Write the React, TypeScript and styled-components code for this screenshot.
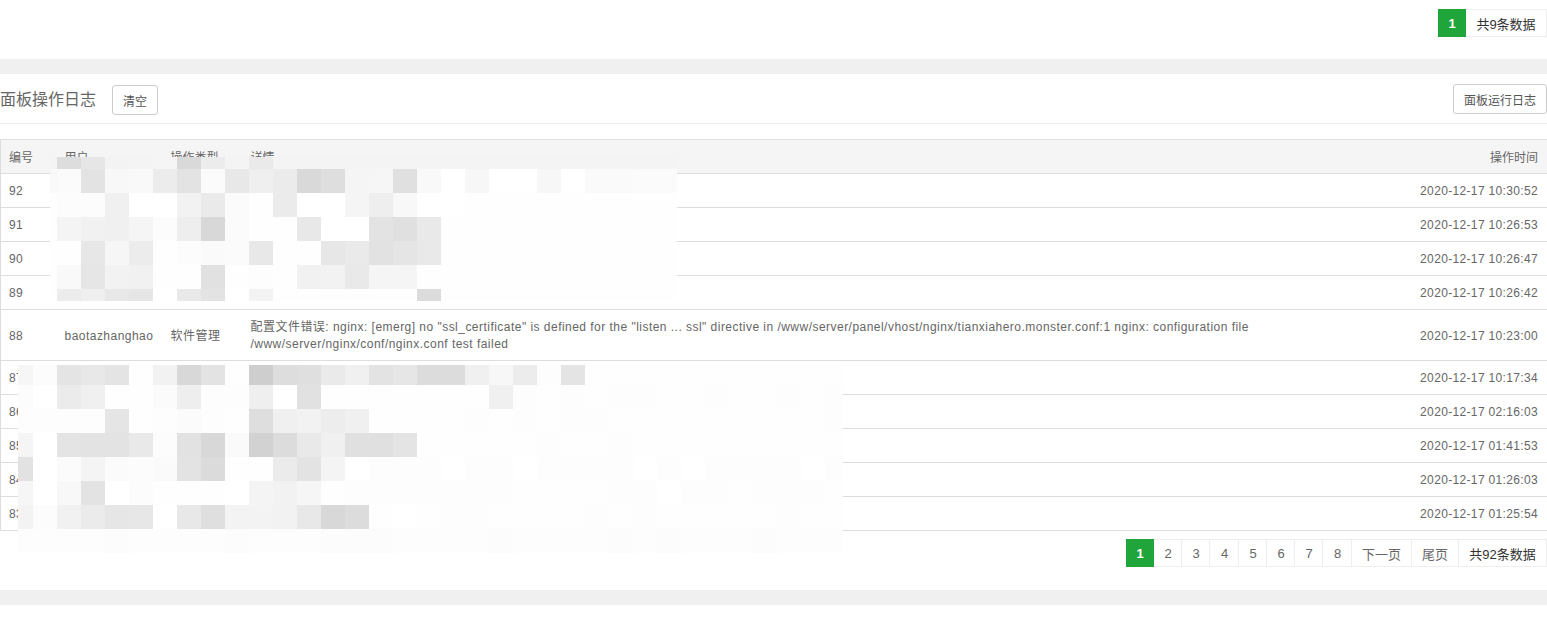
import React from 'react'
import styled, { createGlobalStyle } from 'styled-components'

const GlobalStyle = createGlobalStyle`
  html, body {
    margin: 0;
    background: #fff;
  }
  body {
    font-family: "Liberation Sans", "Noto Sans CJK SC", sans-serif;
    font-size: 12px;
    color: #666;
    overflow: hidden;
  }
`

const Page = styled.div`
  position: relative;
  width: 1547px;
  height: 619px;
  overflow: hidden;
`

const TopPager = styled.div`
  height: 59px;
  padding-top: 9px;
  box-sizing: border-box;
  display: flex;
  justify-content: flex-end;
`

const Band = styled.div`
  height: 15px;
  background: #f0f0f0;
`

const PanelHead = styled.div`
  height: 50px;
  box-sizing: border-box;
  border-bottom: 1px solid #ececec;
  padding-top: 10px;
  display: flex;
  justify-content: space-between;
  align-items: flex-start;
`

const TitleGroup = styled.div`
  display: flex;
  align-items: center;
  padding-top: 1px;
`

const Title = styled.span`
  font-size: 16px;
  line-height: 30px;
  color: #666;
`

const LogButton = styled.button<{ $gap?: number }>`
  height: 30px;
  box-sizing: border-box;
  margin-left: ${p => p.$gap ?? 0}px;
  padding: 0 10px;
  background: #fff;
  border: 1px solid #ccc;
  border-radius: 3px;
  font: inherit;
  font-size: 12px;
  color: #555;
`

const Table = styled.table`
  width: 1547px;
  margin-top: 15px;
  border-collapse: collapse;
  table-layout: fixed;
  letter-spacing: 0.34px;
`

const HeadCell = styled.th<{ $right?: boolean }>`
  height: 34px;
  padding: ${p => (p.$right ? '0 9px 0 8px' : '0 8px')};
  box-sizing: border-box;
  background: #f5f5f5;
  border: 1px solid #ddd;
  border-left: ${p => (p.$right ? 'none' : '')};
  border-right: ${p => (p.$right ? '' : 'none')};
  font-weight: 400;
  text-align: ${p => (p.$right ? 'right' : 'left')};
  color: #666;
  letter-spacing: 0;
`

const Cell = styled.td<{ $right?: boolean }>`
  height: 34px;
  padding: ${p => (p.$right ? '9px 9px 7px 8px' : '9px 8px 7px')};
  box-sizing: border-box;
  border-top: 1px solid #ddd;
  border-bottom: 1px solid #ddd;
  border-left: ${p => (p.$right ? 'none' : '1px solid #ddd')};
  border-right: ${p => (p.$right ? '1px solid #ddd' : 'none')};
  line-height: 17px;
  text-align: ${p => (p.$right ? 'right' : 'left')};
  color: #666;
`

const InnerCell = styled(Cell)`
  border-left: none;
  letter-spacing: 0.47px;
`

const InnerHead = styled(HeadCell)`
  border-left: none;
`

const BottomPager = styled.div`
  margin-top: 8px;
  height: 51px;
  display: flex;
  justify-content: flex-end;
  align-items: flex-start;
`

const PageItem = styled.span<{ $w: number; $active?: boolean; $dark?: boolean; $num?: boolean }>`
  width: ${p => p.$w}px;
  height: 28px;
  box-sizing: border-box;
  padding-left: ${p => (p.$num ? 1 : 0)}px;
  display: flex;
  align-items: center;
  justify-content: center;
  font-size: 13px;
  background: ${p => (p.$active ? '#20a53a' : '#fff')};
  color: ${p => (p.$active ? '#fff' : p.$dark ? '#333' : '#666')};
  font-weight: ${p => (p.$active ? 700 : 400)};
  border: ${p => (p.$active ? 'none' : '1px solid #eee')};
  border-left: none;
`

const Mosaic = styled.div<{ $left: number; $top: number; $width: number; $cols: string; $rows: string }>`
  position: absolute;
  left: ${p => p.$left}px;
  top: ${p => p.$top}px;
  width: ${p => p.$width}px;
  display: grid;
  grid-template-columns: ${p => p.$cols};
  grid-template-rows: ${p => p.$rows};
  overflow: hidden;
`

const Tile = styled.div<{ $v: string }>`
  background: #${p => p.$v}${p => p.$v}${p => p.$v};
`

const rows = [
  ['92', '2020-12-17 10:30:52'],
  ['91', '2020-12-17 10:26:53'],
  ['90', '2020-12-17 10:26:47'],
  ['89', '2020-12-17 10:26:42'],
]

const rowsAfter = [
  ['87', '2020-12-17 10:17:34'],
  ['86', '2020-12-17 02:16:03'],
  ['85', '2020-12-17 01:41:53'],
  ['84', '2020-12-17 01:26:03'],
  ['83', '2020-12-17 01:25:54'],
]

// page 2-8 cells are not all the same width in the reference
const pageCells: [string, number][] = [
  ['2', 28], ['3', 28], ['4', 29], ['5', 28], ['6', 28], ['7', 28], ['8', 29],
]

// pixelated cover over the first rows, one string per row, 2 hex digits per tile
const firstCover = [
  'f4 dd e6 f3 f4 f5 d9 ec f4 ea f4 f4 f4 f4 f4 f4 f4 f4 f4 f4 f4 f4 f4 f4 f4 f4 f4',
  'f9 fb e3 f8 f9 ec e3 fb e8 ef eb d9 de f5 f6 e0 f9 ff f7 ff ff f7 ff fa fa fb fb',
  'fe fc fc f0 ff ff f2 ea fb fe eb ff ff f5 ee f8 ff ff fe fe fe fe fe fe fe fe fe',
  'fe f4 f1 f0 f5 fc ee d8 fb fe fe e8 ff ff e3 e0 e9 fe fe fe fe fe fe fe fe fe fe',
  'fe fe e7 f6 ec fe fc fa fb e8 fe fe e7 ea e2 e5 e9 fe fe fe fe fe fe fe fe fe fe',
  'fe f9 e6 f2 f1 fe fe e1 fe fd fe f1 f2 e9 f5 f5 fe fe fe fe fe fe fe fe fe fe fe',
  'fe ec ef e8 e6 ff e9 e3 ff f3 fe fe fe fe fe fe dc fe fe fe fe fe fe fe fe fe fe',
]

const secondCover = [
  'f6 fc e4 e8 e4 fe f2 d8 e3 fe ce dd df ea f0 e3 e6 dc dc f0 f7 ec fd e4 fe fe fe fe fe fe fe fe fe fe fe',
  'fc ff eb f0 fe fe fb ee fd fd ef ff e1 fe fe fe fe fe fe fe f0 fd fe fd fe fd fd fe fe fd fe fe fd fe fd',
  'fd fd fd fd e5 fe fd fb fd fe de f0 f2 ed f0 fe fe fe fe fd fe fd fe fd fd fe fe fe fe fe fe fe fe fe fd',
  'f5 ff e4 e3 e3 e9 fc e2 d8 fa d2 dc e9 f0 e0 e0 e4 fe fe fe fe fe fd fe fe fd fe fe fe fe fe fe fe fe fe',
  'e2 ff fb f4 fb fc fa e3 db fe fe eb e3 f4 ff fd fd fd ff fd fd ff fd fd fd fd ff fd ff fd fd fd fd ff fd',
  'f6 ff f8 e3 ff fc fe fe fe ff f4 f2 f6 fe fd fd fd fd fd fd fd fe fe fe fe fd fd ff fd fd fe fd fd fd fe',
  'f3 fc f1 eb e6 e7 ff e8 df f3 f3 f2 e8 d8 dc fe ff fe fd fd fe fe fe fe fd fe fd fe fe fe fe fe fd fe fe',
  'fd fd fd fd fc fd fd fd fd fc fd fd fd fc fc fc fd fd fd fd fc fd fd fd fd fc fd fc fd fd fd fc fd fd fd',
]

function Cover({ data, left, top, width, cols, rowSizes }: {
  data: string[]; left: number; top: number; width: number; cols: string; rowSizes: string
}) {
  return (
    <Mosaic $left={left} $top={top} $width={width} $cols={cols} $rows={rowSizes}>
      {data.flatMap((line, r) =>
        line.split(' ').map((v, c) => <Tile key={r + '-' + c} $v={v} />)
      )}
    </Mosaic>
  )
}

export default function App() {
  return (
    <Page>
      <GlobalStyle />
      <TopPager>
        <PageItem $w={28} $active>1</PageItem>
        <PageItem $w={81} $dark>共9条数据</PageItem>
      </TopPager>
      <Band />
      <PanelHead>
        <TitleGroup>
          <Title>面板操作日志</Title>
          <LogButton $gap={16}>清空</LogButton>
        </TitleGroup>
        <LogButton>面板运行日志</LogButton>
      </PanelHead>
      <Table>
        <colgroup>
          <col width={56} />
          <col width={106} />
          <col width={80} />
          <col width={1130} />
          <col width={175} />
        </colgroup>
        <thead>
          <tr>
            <HeadCell>编号</HeadCell>
            <InnerHead>用户</InnerHead>
            <InnerHead>操作类型</InnerHead>
            <InnerHead>详情</InnerHead>
            <HeadCell $right>操作时间</HeadCell>
          </tr>
        </thead>
        <tbody>
          {rows.map(r => (
            <tr key={r[0]}>
              <Cell>{r[0]}</Cell>
              <InnerCell />
              <InnerCell />
              <InnerCell />
              <Cell $right>{r[1]}</Cell>
            </tr>
          ))}
          <tr>
            <Cell>88</Cell>
            <InnerCell>baotazhanghao</InnerCell>
            <InnerCell>软件管理</InnerCell>
            <InnerCell>
              配置文件错误: nginx: [emerg] no "ssl_certificate" is defined for the "listen ... ssl" directive in /www/server/panel/vhost/nginx/tianxiahero.monster.conf:1 nginx: configuration file
              <br />
              /www/server/nginx/conf/nginx.conf test failed
            </InnerCell>
            <Cell $right>2020-12-17 10:23:00</Cell>
          </tr>
          {rowsAfter.map(r => (
            <tr key={r[0]}>
              <Cell>{r[0]}</Cell>
              <InnerCell />
              <InnerCell />
              <InnerCell />
              <Cell $right>{r[1]}</Cell>
            </tr>
          ))}
        </tbody>
      </Table>
      <BottomPager>
        <PageItem $w={28} $active>1</PageItem>
        {pageCells.map(([n, w]) => (
          <PageItem key={n} $w={w} $num>{n}</PageItem>
        ))}
        <PageItem $w={60}>下一页</PageItem>
        <PageItem $w={47}>尾页</PageItem>
        <PageItem $w={88} $dark>共92条数据</PageItem>
      </BottomPager>
      <Band />
      <Cover
        data={firstCover}
        left={50}
        top={157}
        width={627}
        cols="7px repeat(26, 24px)"
        rowSizes="12px repeat(5, 24px) 12px"
      />
      <Cover
        data={secondCover}
        left={18}
        top={365}
        width={825}
        cols="15px repeat(34, 24px)"
        rowSizes="20px repeat(7, 24px)"
      />
    </Page>
  )
}
